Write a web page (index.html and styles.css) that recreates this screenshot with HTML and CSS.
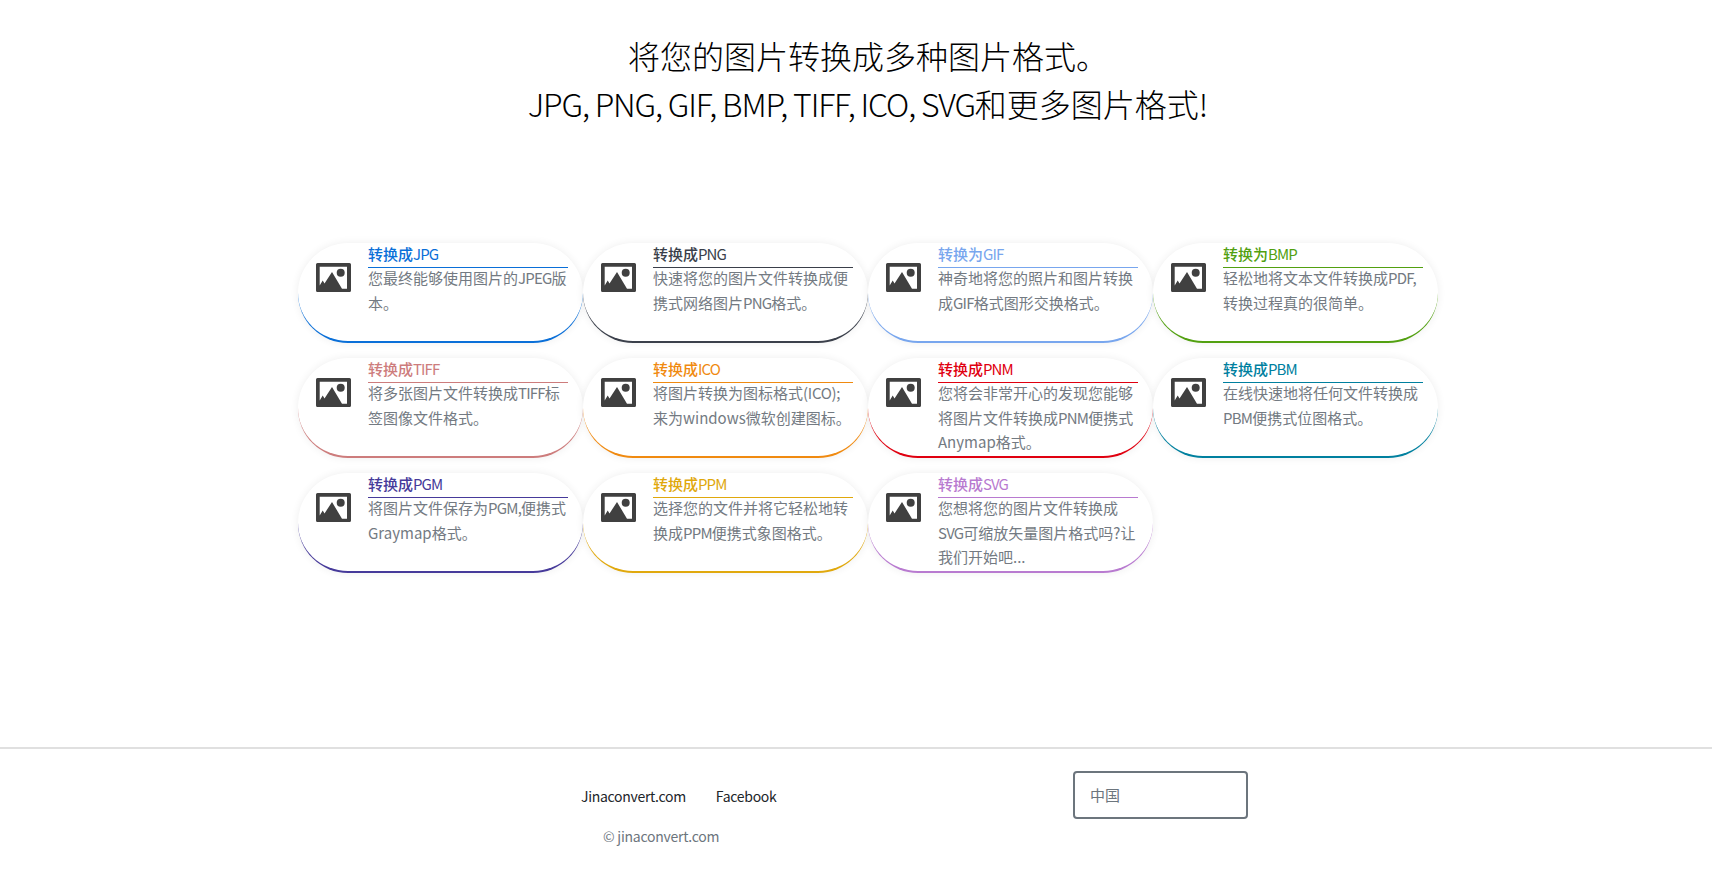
FILE: index.html
```html
<!DOCTYPE html>
<html lang="zh">
<head>
<meta charset="utf-8">
<title>图片转换</title>
<link rel="stylesheet" href="styles.css">
</head>
<body>
<svg class="defs" width="0" height="0" aria-hidden="true"><symbol id="pic" viewBox="0 0 35 29"><path fill-rule="evenodd" d="M1.500 0h32a1.500 1.500 0 0 1 1.500 1.500v26a1.500 1.500 0 0 1-1.500 1.500h-32a1.500 1.500 0 0 1-1.500-1.500v-26a1.500 1.500 0 0 1 1.500-1.500zM3.700 3.700v22H31v-22zM3.700 25.700V22.500L6.700 17.500l1.800 3L16 9l10 16.700z"/><circle cx="24.700" cy="9.700" r="4"/></symbol></svg>
<main class="page">
<header class="intro">
<h1 class="intro-title">将您的图片转换成多种图片格式。</h1>
<h2 class="intro-title"><span class="lat">JPG, PNG, GIF, BMP, TIFF, ICO, SVG</span>和更多图片格式!</h2>
</header>
<section class="cards">
<a class="card c-jpg"><svg class="icon"><use href="#pic"/></svg><div class="body"><h3 class="name"><b>转换成</b><span class="up">JPG</span></h3><p class="desc">您最终能够使用图片的<span class="up">JPEG</span>版本。</p></div></a>
<a class="card c-png"><svg class="icon"><use href="#pic"/></svg><div class="body"><h3 class="name"><b>转换成</b><span class="up">PNG</span></h3><p class="desc">快速将您的图片文件转换成便携式网络图片<span class="up">PNG</span>格式。</p></div></a>
<a class="card c-gif"><svg class="icon"><use href="#pic"/></svg><div class="body"><h3 class="name"><b>转换为</b><span class="up">GIF</span></h3><p class="desc">神奇地将您的照片和图片转换成<span class="up">GIF</span>格式图形交换格式。</p></div></a>
<a class="card c-bmp"><svg class="icon"><use href="#pic"/></svg><div class="body"><h3 class="name"><b>转换为</b><span class="up">BMP</span></h3><p class="desc">轻松地将文本文件转换成<span class="up">PDF,</span>转换过程真的很简单。</p></div></a>
<a class="card c-tiff"><svg class="icon"><use href="#pic"/></svg><div class="body"><h3 class="name"><b>转换成</b><span class="up">TIFF</span></h3><p class="desc">将多张图片文件转换成<span class="up">TIFF</span>标签图像文件格式。</p></div></a>
<a class="card c-ico"><svg class="icon"><use href="#pic"/></svg><div class="body"><h3 class="name"><b>转换成</b><span class="up">ICO</span></h3><p class="desc">将图片转换为图标格式<span class="tight">(ICO);</span>来为windows微软创建图标。</p></div></a>
<a class="card c-pnm"><svg class="icon"><use href="#pic"/></svg><div class="body"><h3 class="name"><b>转换成</b><span class="up">PNM</span></h3><p class="desc">您将会非常开心的发现您能够将图片文件转换成<span class="up">PNM</span>便携式Anymap格式。</p></div></a>
<a class="card c-pbm"><svg class="icon"><use href="#pic"/></svg><div class="body"><h3 class="name"><b>转换成</b><span class="up">PBM</span></h3><p class="desc">在线快速地将任何文件转换成<span class="up">PBM</span>便携式位图格式。</p></div></a>
<a class="card c-pgm"><svg class="icon"><use href="#pic"/></svg><div class="body"><h3 class="name"><b>转换成</b><span class="up">PGM</span></h3><p class="desc">将图片文件保存为<span class="up">PGM,</span>便携式Graymap格式。</p></div></a>
<a class="card c-ppm"><svg class="icon"><use href="#pic"/></svg><div class="body"><h3 class="name"><b>转换成</b><span class="up">PPM</span></h3><p class="desc">选择您的文件并将它轻松地转换成<span class="up">PPM</span>便携式象图格式。</p></div></a>
<a class="card c-svg"><svg class="icon"><use href="#pic"/></svg><div class="body"><h3 class="name"><b>转换成</b><span class="up">SVG</span></h3><p class="desc">您想将您的图片文件转换成<span class="up">SVG</span>可缩放矢量图片格式吗?让我们开始吧...</p></div></a>
</section>
</main>
<footer class="foot">
<div class="foot-left">
<nav class="foot-links"><a>Jinaconvert.com</a><a>Facebook</a></nav>
<p class="copy">© jinaconvert.com</p>
</div>
<select class="lang"><option>中国</option></select>
</footer>
</body>
</html>
```
FILE: styles.css
```css
html, body { margin: 0; padding: 0; background: #fff; }
body { font-family: "Noto Sans CJK SC", sans-serif; color: #212529; height: 888px; overflow: hidden; }
.defs { display: block; height: 0; }
.page { width: 1140px; margin-left: 298px; height: 747px; }
.intro { padding-top: 31px; height: 243px; box-sizing: border-box; text-align: center; }
.intro-title { margin: 0; font-size: 32px; font-weight: 300; line-height: 48px; color: #000; }
.lat { letter-spacing: -1.15px; }
.cards { display: grid; grid-template-columns: repeat(4, 285px); grid-auto-rows: 100px; row-gap: 15px; }
.card { display: flex; box-sizing: border-box; background: #fff; border-radius: 50px; border-bottom: 2px solid var(--accent); box-shadow: 0 0 8px rgba(0,0,0,.07); }
.icon { flex: none; width: 35px; height: 29px; margin: 20px 0 0 18px; fill: #404040; }
.body { width: 200px; margin-left: 17px; }
.name { position: relative; margin: 0 0 1px; font-size: 15px; font-weight: 400; line-height: 22px; color: var(--accent); }
.name::after { content: ""; position: absolute; left: 0; right: 0; top: 24px; height: 1px; background: var(--accent); }
.name b { font-weight: 500; }
.name .up { letter-spacing: -.9px; }
.desc { margin: 0; font-size: 15px; line-height: 24.5px; color: #737a82; }
.up { letter-spacing: -.8px; }
.tight { letter-spacing: -.3px; }
.c-jpg { --accent: #0a6fd8; }
.c-png { --accent: #3a3f4a; }
.c-gif { --accent: #78a6ee; }
.c-bmp { --accent: #52a010; }
.c-tiff { --accent: #cd7c7c; }
.c-ico { --accent: #f08a10; }
.c-pnm { --accent: #e00010; }
.c-pbm { --accent: #00809f; }
.c-pgm { --accent: #463a9a; }
.c-ppm { --accent: #e0a80c; }
.c-svg { --accent: #b87ad0; }
.foot { display: flex; align-items: flex-start; height: 141px; box-sizing: border-box; border-top: 2px solid #e0e0e0; padding-left: 581px; }
.foot-left { width: 492px; }
.foot-links { display: flex; gap: 30px; margin-top: 37px; font-size: 14px; line-height: 21px; letter-spacing: -.3px; color: #212529; }
.copy { margin: 19px 0 0 22px; font-size: 14px; line-height: 21px; letter-spacing: -.25px; color: #6c757d; }
.lang { appearance: none; width: 175px; height: 48px; margin-top: 22px; padding: 0 15px 2px; border: 2px solid #6c757d; border-radius: 4px; background: #fff; font: 15px "Noto Sans CJK SC", sans-serif; color: #6c757d; }
```
